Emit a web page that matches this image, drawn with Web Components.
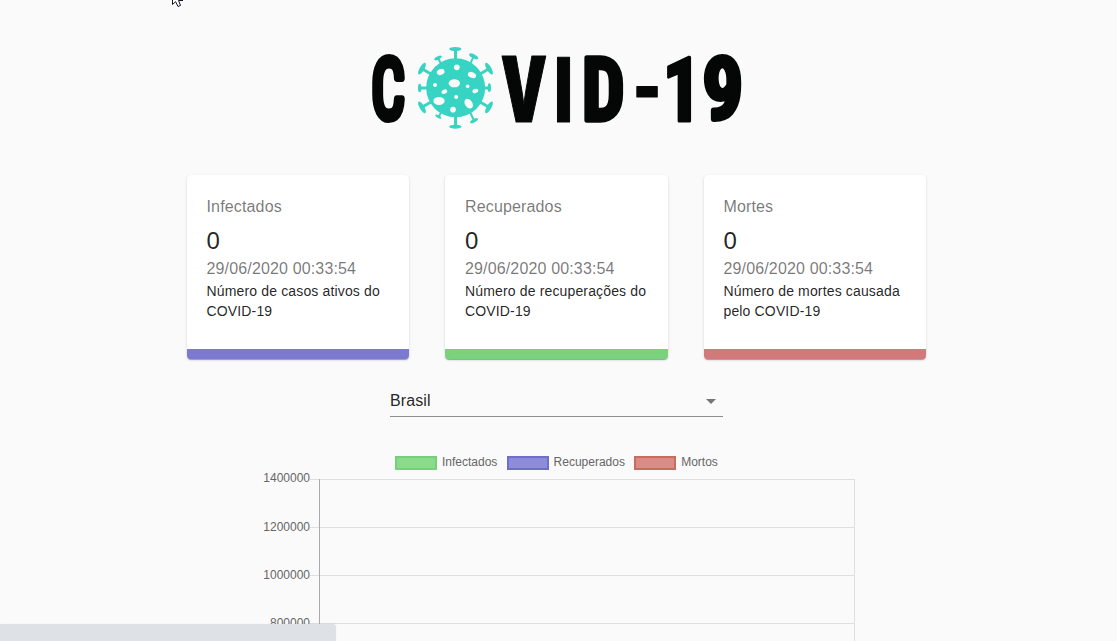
<!DOCTYPE html>
<html lang="pt-BR">
<head>
<meta charset="utf-8">
<title>COVID-19</title>
<style>
html,body{margin:0;height:100%;overflow:hidden;background:#fafafa}
body{font-family:"Liberation Sans",Arial,Helvetica,sans-serif;color:rgba(0,0,0,.87)}
</style>
</head>
<body>
<covid-app></covid-app>
<script>
const define = (name, html, setup) => {
  const template = document.createElement('template');
  template.innerHTML = html;
  customElements.define(name, class extends HTMLElement {
    constructor() {
      super();
      this.attachShadow({mode: 'open'}).append(template.content.cloneNode(true));
    }
    connectedCallback() { if (setup) setup(this, this.shadowRoot); }
  });
};

define('covid-logo', `
<style>
:host{display:block;width:392px;height:104px}
svg{display:block;overflow:visible}
text{font-stretch:75%;font-size:100px;fill:#050707;stroke:#050707;stroke-linejoin:round;vector-effect:non-scaling-stroke}
</style>
<svg width="392" height="104" viewBox="0 0 392 104" role="img" aria-label="COVID-19">
  <g id="letters"></g>
  <g transform="scale(.33333)" fill="#38d4c3">
    <circle cx="287" cy="155.500" r="88.500"/>
    <g stroke="#38d4c3" stroke-width="9">
      <path d="M286.500 38V272M182 156H388M187 99L386 213M386 99L187 213"/>
      <path stroke-width="6" d="M234 67L246 88M341 62L328 88M236 242L244 228M342 254L330 228"/>
    </g>
    <ellipse cx="286" cy="39" rx="18.500" ry="6"/>
    <ellipse cx="286" cy="272" rx="18.500" ry="6"/>
    <ellipse cx="179" cy="156" rx="5" ry="13"/>
    <ellipse cx="388" cy="155" rx="5" ry="13"/>
    <ellipse cx="186" cy="98" rx="20" ry="7" transform="rotate(-60 186 98)"/>
    <ellipse cx="387" cy="98" rx="20" ry="7" transform="rotate(60 387 98)"/>
    <ellipse cx="186" cy="214" rx="20" ry="7" transform="rotate(60 186 214)"/>
    <ellipse cx="387" cy="214" rx="20" ry="7" transform="rotate(-60 387 214)"/>
    <ellipse cx="234" cy="66" rx="12" ry="5" transform="rotate(-25 234 66)"/>
    <ellipse cx="341" cy="61" rx="15" ry="6" transform="rotate(28 341 61)"/>
    <ellipse cx="235" cy="242" rx="10" ry="4" transform="rotate(28 235 242)"/>
    <ellipse cx="342" cy="254" rx="13" ry="5" transform="rotate(-28 342 254)"/>
    <g fill="#fafafa">
      <ellipse cx="283" cy="142" rx="17" ry="12"/>
      <circle cx="290.500" cy="94" r="8.500"/>
      <ellipse cx="242" cy="108" rx="12" ry="8.500" transform="rotate(-20 242 108)"/>
      <ellipse cx="336" cy="117" rx="13" ry="8.500" transform="rotate(25 336 117)"/>
      <circle cx="225" cy="147" r="6"/><circle cx="323" cy="151" r="5.500"/>
      <ellipse cx="253" cy="167" rx="9" ry="6" transform="rotate(-25 253 167)"/>
      <ellipse cx="346" cy="165" rx="9" ry="6" transform="rotate(-20 346 165)"/>
      <circle cx="288.500" cy="183" r="6"/>
      <ellipse cx="237" cy="195" rx="17" ry="12"/>
      <ellipse cx="326" cy="203" rx="11" ry="16" transform="rotate(-35 326 203)"/>
      <circle cx="279" cy="221" r="8.500"/>
    </g>
  </g>
</svg>`, (host, root) => {
  const ctx = document.createElement('canvas').getContext('2d');
  const roboto = 'Roboto, sans-serif', open = '"Open Sans", sans-serif';
  // character, left, top, right, bottom of its ink, outline width, family, weight
  const letters = [
    ['C', 11.6, 19, 46, 86.5, 7, roboto, 400], ['V', 141.5, 20, 186.3, 86.5, 1, open, 800],
    ['I', 196.5, 20, 210.3, 86.5, 1, roboto, 700], ['D', 224, 20, 263.6, 86.5, 5, roboto, 600],
    ['-', 275.5, 48.5, 298, 60.7, 1, roboto, 700], ['1', 306.5, 20, 332, 86.5, 3, roboto, 700],
    ['9', 343.3, 18.8, 382, 86.4, 6, roboto, 500]
  ];
  const group = root.getElementById('letters');
  group.replaceChildren();
  for (const [ch, l, t, r, b, w, family, weight] of letters) {
    ctx.font = weight + ' 100px ' + family;
    ctx.fontStretch = 'condensed';
    const m = ctx.measureText(ch);
    const sx = (r - l - w) / (m.actualBoundingBoxRight + m.actualBoundingBoxLeft);
    const sy = (b - t - w) / (m.actualBoundingBoxAscent + m.actualBoundingBoxDescent);
    const text = document.createElementNS('http://www.w3.org/2000/svg', 'text');
    text.textContent = ch;
    text.style.strokeWidth = w;
    text.style.fontFamily = family;
    text.style.fontWeight = weight;
    text.setAttribute('transform', `matrix(${sx} 0 0 ${sy} ${l + w / 2 + m.actualBoundingBoxLeft * sx} ${t + w / 2 + m.actualBoundingBoxAscent * sy})`);
    group.append(text);
  }
});

define('stat-card', `
<style>
:host{display:block;box-sizing:border-box;height:184px;padding:20px 19.5px 0;background:#fff;border-bottom:10px solid var(--accent);border-radius:4px;box-shadow:0 2px 1px -1px rgba(0,0,0,.2),0 1px 1px rgba(0,0,0,.14),0 1px 3px rgba(0,0,0,.12)}
.muted{font-size:16px;line-height:24px;letter-spacing:.15px;color:rgba(0,0,0,.54)}
.title{margin-bottom:5.6px}
.value{font-size:24px;line-height:32px}
.note{font-size:14px;line-height:20px;letter-spacing:.15px}
</style>
<div class="muted title"><slot name="title"></slot></div>
<div class="value"><slot name="value"></slot></div>
<div class="muted"><slot name="date"></slot></div>
<div class="note"><slot></slot></div>`);

define('country-select', `
<style>
:host{display:flex;box-sizing:border-box;width:333px;height:32px;align-items:center;justify-content:space-between;border-bottom:1px solid #8e8e8e;font-size:16px;letter-spacing:.1px}
svg{display:block}
</style>
<slot></slot>
<svg width="24" height="24" viewBox="0 0 24 24"><path fill="#757575" d="M7 10l5 5 5-5z"/></svg>`);

define('legend-item', `
<style>
:host{display:flex;align-items:center;font-size:12px;line-height:14px;color:#666}
i{box-sizing:border-box;width:42px;height:14px;margin-right:5px;background:var(--fill);border:2px solid var(--line)}
span{position:relative;top:-1px}
</style><i></i><span><slot></slot></span>`);

define('cases-chart', `
<style>
:host{display:block;width:592px}
.legend{display:flex;gap:9.2px;height:14px;margin-bottom:9px;padding-left:132px}
.plot{display:grid;grid-template-columns:47px 1fr;column-gap:0}
.ticks{font-size:12px;line-height:14px;color:#666;text-align:right;margin-top:-8px}
.ticks div{height:48px}
.ticks div:first-child{height:49px}
.grid{display:grid;grid-template-columns:9px 1fr}
.row{height:47px;border-top:1px solid #dfdfdf}
.area{border-left:1px solid #a9a9a9;border-right:1px solid #e0e0e0}
</style>
<div class="legend">
<legend-item style="--fill:#8cda8c;--line:#76d07b">Infectados</legend-item>
<legend-item style="--fill:#8c8cda;--line:#6f6fcb">Recuperados</legend-item>
<legend-item style="--fill:#da8c86;--line:#c96c60">Mortos</legend-item>
</div>
<div class="plot">
<div class="ticks"><div>1400000</div><div>1200000</div><div>1000000</div><div>800000</div></div>
<div class="grid">
<div><div class="row"></div><div class="row"></div><div class="row"></div><div class="row"></div></div>
<div class="area"><div class="row"></div><div class="row"></div><div class="row"></div><div class="row"></div></div>
</div>
</div>`);

define('status-bubble', `
<style>:host{display:block;position:absolute;left:0;bottom:0;width:336px;height:17px;background:#dee1e6;border-radius:0 4px 0 0;box-shadow:0 0 1px rgba(0,0,0,.12)}</style>`);

define('mouse-pointer', `
<style>:host{display:block;position:absolute;left:171px;top:-10px}svg{display:block}</style>
<svg width="14" height="19" viewBox="0 0 14 19"><path d="M1.500 1V14.500L4.600 11.700L7 16.500L9.500 15.400L7.500 10.500H12z" fill="#fff" stroke="#15151e"/></svg>`);

define('covid-app', `
<style>
:host{display:flex;flex-direction:column;position:relative;height:641px;box-sizing:border-box;padding-top:36px;overflow:hidden}
covid-logo,.cards,country-select,cases-chart{flex-shrink:0}
covid-logo{margin-left:360px}
.cards{display:grid;grid-template-columns:repeat(3,222.400px);column-gap:36.100px;margin:35px 0 0 187px}
country-select{margin:26px 0 0 390px}
cases-chart{margin:39px 0 0 263px}
</style>
<covid-logo></covid-logo>
<div class="cards">
<stat-card style="--accent:#7c79d3"><span slot="title">Infectados</span><span slot="value">0</span><span slot="date">29/06/2020 00:33:54</span>Número de casos ativos do COVID-19</stat-card>
<stat-card style="--accent:#79d37c"><span slot="title">Recuperados</span><span slot="value">0</span><span slot="date">29/06/2020 00:33:54</span>Número de recuperações do COVID-19</stat-card>
<stat-card style="--accent:#d37979"><span slot="title">Mortes</span><span slot="value">0</span><span slot="date">29/06/2020 00:33:54</span>Número de mortes causada pelo COVID-19</stat-card>
</div>
<country-select>Brasil</country-select>
<cases-chart></cases-chart>
<status-bubble></status-bubble>
<mouse-pointer></mouse-pointer>`);
</script>
</body>
</html>
